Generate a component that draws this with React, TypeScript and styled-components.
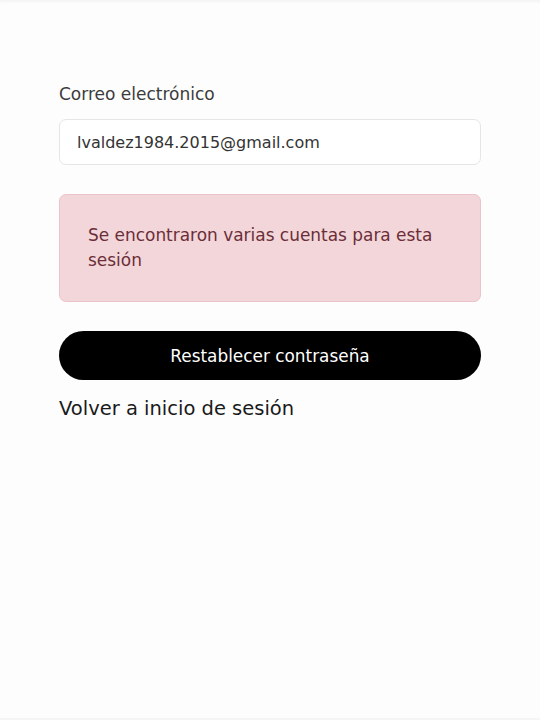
import React from "react";
import styled, { createGlobalStyle } from "styled-components";

const GlobalStyle = createGlobalStyle`
  html, body {
    margin: 0;
    padding: 0;
    background: #fdfdfd;
  }
  body {
    font-family: "DejaVu Sans", "Noto Sans", sans-serif;
    -webkit-font-smoothing: antialiased;
  }
  * { box-sizing: border-box; }
`;

const Page = styled.div`
  min-height: 720px;
  background: #fdfdfd;
  display: flex;
  flex-direction: column;
  box-shadow: inset 0 4px 4px -3px rgba(0, 0, 0, 0.06);
  border-bottom: 2px solid #f5f5f5;
`;

const Form = styled.form`
  display: flex;
  flex-direction: column;
  padding: 82px 59px 0 59px;
`;

const Label = styled.label`
  font-size: 17px;
  line-height: 24px;
  color: #3b3b3b;
  margin-bottom: 13px;
`;

const Input = styled.input`
  height: 46px;
  width: 100%;
  border: 1px solid #e6e6e6;
  border-radius: 7px;
  background: #ffffff;
  padding: 0 17px;
  font-family: inherit;
  font-size: 16px;
  color: #333333;
  outline: none;
`;

const Alert = styled.div`
  margin-top: 29px;
  background: #f3d6d9;
  border: 1px solid #ebc4c9;
  border-radius: 7px;
  padding: 27.5px 28px 28.5px 28px;
  color: #6b2e38;
  font-size: 16.95px;
  line-height: 25px;
`;

const SubmitButton = styled.button`
  margin-top: 29px;
  height: 49px;
  width: 100%;
  border: none;
  border-radius: 999px;
  background: #000000;
  color: #ffffff;
  font-family: inherit;
  font-size: 16.9px;
  cursor: pointer;
`;

const BackLink = styled.a`
  margin-top: 16px;
  font-size: 19.5px;
  line-height: 26px;
  color: #1a1a1a;
  text-decoration: none;
  align-self: flex-start;
  cursor: pointer;
`;

export default function App() {
  return (
    <>
      <GlobalStyle />
      <Page>
        <Form onSubmit={(e) => e.preventDefault()}>
          <Label htmlFor="email">Correo electrónico</Label>
          <Input id="email" type="email" defaultValue="lvaldez1984.2015@gmail.com" />
          <Alert role="alert">Se encontraron varias cuentas para esta sesión</Alert>
          <SubmitButton type="submit">Restablecer contraseña</SubmitButton>
          <BackLink>Volver a inicio de sesión</BackLink>
        </Form>
      </Page>
    </>
  );
}
